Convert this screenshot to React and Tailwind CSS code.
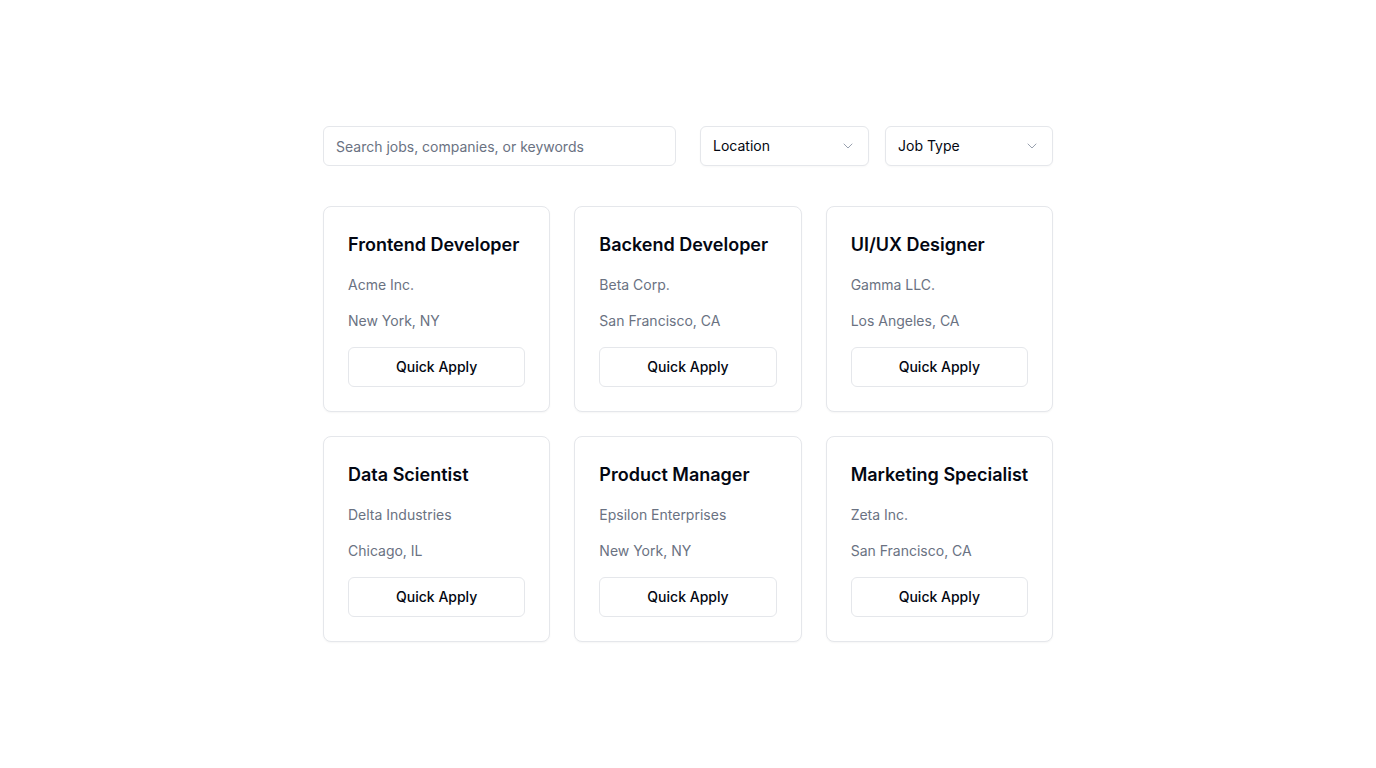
import React from 'react';
import { ChevronDown } from 'lucide-react';

const jobs = [
  { title: 'Frontend Developer', company: 'Acme Inc.', location: 'New York, NY' },
  { title: 'Backend Developer', company: 'Beta Corp.', location: 'San Francisco, CA' },
  { title: 'UI/UX Designer', company: 'Gamma LLC.', location: 'Los Angeles, CA' },
  { title: 'Data Scientist', company: 'Delta Industries', location: 'Chicago, IL' },
  { title: 'Product Manager', company: 'Epsilon Enterprises', location: 'New York, NY' },
  { title: 'Marketing Specialist', company: 'Zeta Inc.', location: 'San Francisco, CA' },
];

const SelectBox = ({ label, width }) => (
  <button
    className={`flex h-10 items-center justify-between rounded-md border border-gray-200 bg-white px-3 text-sm text-gray-950 shadow-[0_1px_2px_rgba(0,0,0,0.03)] ${width}`}
  >
    <span>{label}</span>
    <ChevronDown className="h-4 w-4 text-gray-400" strokeWidth={1.5} />
  </button>
);

const JobCard = ({ job }) => (
  <div className="flex flex-col gap-4 rounded-lg border border-gray-200 bg-white p-6 shadow-[0_1px_2px_rgba(0,0,0,0.04)]">
    <h3 className="whitespace-nowrap text-lg font-semibold leading-7 text-gray-950">{job.title}</h3>
    <p className="text-sm leading-5 text-gray-500">{job.company}</p>
    <p className="text-sm leading-5 text-gray-500">{job.location}</p>
    <button className="h-10 w-full rounded-md border border-gray-200 bg-white text-sm font-medium text-gray-950">
      Quick Apply
    </button>
  </div>
);

const App = () => {
  return (
    <div
      className="flex min-h-screen items-center justify-center bg-white"
      style={{ fontFamily: 'Inter, "Noto Sans", sans-serif' }}
    >
      <div className="w-[730px]">
        <div className="mb-10 flex items-center">
          <input
            type="text"
            placeholder="Search jobs, companies, or keywords"
            className="h-10 w-[353px] rounded-md border border-gray-200 bg-white px-3 text-sm text-gray-950 placeholder:text-gray-500 outline-none"
          />
          <div className="ml-6 flex gap-4">
            <SelectBox label="Location" width="w-[169px]" />
            <SelectBox label="Job Type" width="w-[168px]" />
          </div>
        </div>
        <div className="grid grid-cols-3 gap-6">
          {jobs.map((job) => (
            <JobCard key={job.title} job={job} />
          ))}
        </div>
      </div>
    </div>
  );
};

export default App;
